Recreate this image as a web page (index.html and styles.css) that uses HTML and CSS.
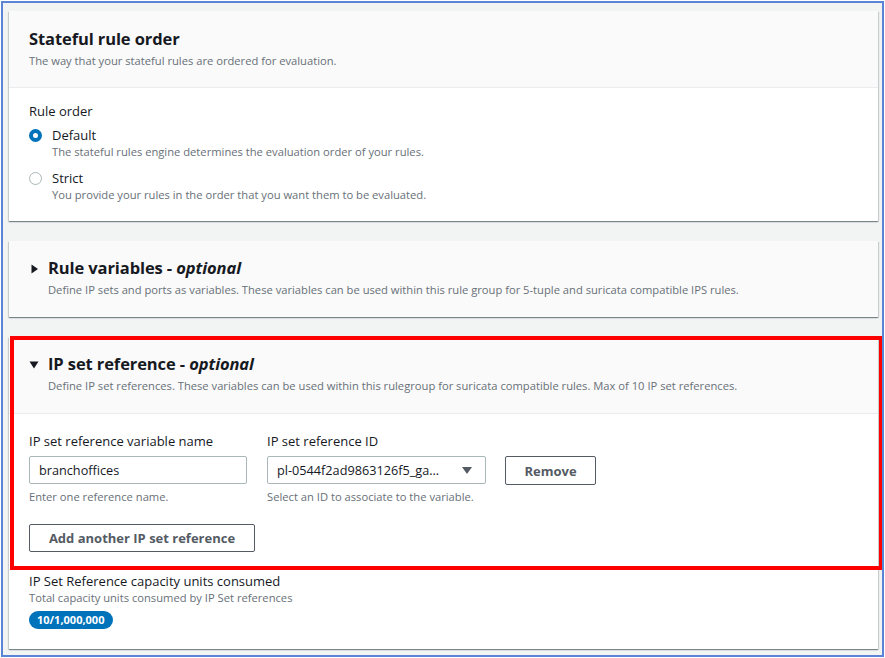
FILE: index.html
```html
<!DOCTYPE html>
<html lang="en">
<head>
    <meta charset="UTF-8">
    <meta name="viewport" content="width=device-width, initial-scale=1.0">
    <title>Stateful rule group</title>
    <link rel="stylesheet" href="styles.css">
</head>
<body>
    <div class="marco">
        <div class="tarjeta">
            <div class="tarjeta-cabecera">
                <h2 class="titulo">Stateful rule order</h2>
                <p class="descripcion">The way that your stateful rules are ordered for evaluation.</p>
            </div>
            <div class="tarjeta-cuerpo orden">
                <div class="etiqueta">Rule order</div>
                <div class="opcion">
                    <span class="radio marcado"></span>
                    <div>
                        <div class="opcion-texto">Default</div>
                        <div class="ayuda">The stateful rules engine determines the evaluation order of your rules.</div>
                    </div>
                </div>
                <div class="opcion">
                    <span class="radio"></span>
                    <div>
                        <div class="opcion-texto">Strict</div>
                        <div class="ayuda">You provide your rules in the order that you want them to be evaluated.</div>
                    </div>
                </div>
            </div>
        </div>

        <div class="tarjeta">
            <div class="tarjeta-cabecera plegable sin-borde">
                <h2 class="titulo">
                    <svg class="flecha" width="19" height="10" viewBox="0 0 19 10"><polygon points="2.5,0.5 9,5 2.5,9.5" fill="#16191f"/></svg>Rule variables - <i>optional</i>
                </h2>
                <p class="descripcion">Define IP sets and ports as variables. These variables can be used within this rule group for 5-tuple and suricata compatible IPS rules.</p>
            </div>
        </div>

        <div class="tarjeta ultima">
            <div class="resaltado"></div>
            <div class="tarjeta-cabecera plegable">
                <h2 class="titulo">
                    <svg class="flecha" width="19" height="10" viewBox="0 0 19 10"><polygon points="0.5,1.5 9.5,1.5 5,8.5" fill="#16191f"/></svg>IP set reference - <i>optional</i>
                </h2>
                <p class="descripcion">Define IP set references. These variables can be used within this rulegroup for suricata compatible rules. Max of 10 IP set references.</p>
            </div>
            <div class="tarjeta-cuerpo">
                <div class="fila">
                    <div class="campo">
                        <label class="etiqueta">IP set reference variable name</label>
                        <div class="entrada">branchoffices</div>
                        <div class="ayuda">Enter one reference name.</div>
                    </div>
                    <div class="campo">
                        <label class="etiqueta">IP set reference ID</label>
                        <div class="entrada selector">
                            <span>pl-0544f2ad9863126f5_ga...</span>
                            <svg width="10" height="8" viewBox="0 0 10 8"><polygon points="0,1 10,1 5,8" fill="#545b64"/></svg>
                        </div>
                        <div class="ayuda">Select an ID to associate to the variable.</div>
                    </div>
                    <button class="boton quitar">Remove</button>
                </div>
                <button class="boton agregar">Add another IP set reference</button>

                <div class="capacidad">
                    <div class="etiqueta">IP Set Reference capacity units consumed</div>
                    <div class="ayuda">Total capacity units consumed by IP Set references</div>
                    <span class="insignia">10/1,000,000</span>
                </div>
            </div>
        </div>
    </div>
</body>
</html>
```

FILE: styles.css
```css
* {
    box-sizing: border-box;
}

body {
    margin: 0;
    font-family: 'Open Sans', 'Noto Sans', Arial, sans-serif;
    color: #16191f;
    background-color: #fff;
}

.marco {
    margin: 1px;
    height: 656px;
    border: 2px solid #5b84d6;
    background-color: #f2f3f3;
    padding: 8px 4px 0 6px;
    overflow: hidden;
}

.tarjeta {
    background-color: #fff;
    box-shadow: 0 1px 1px 0 rgba(0, 28, 36, 0.35), 1px 1px 1px 0 rgba(0, 28, 36, 0.12), -1px 1px 1px 0 rgba(0, 28, 36, 0.12);
    margin-bottom: 20px;
    position: relative;
}

.tarjeta-cabecera {
    background-color: #fafafa;
    padding: 17px 20px 18px;
    border-bottom: 1px solid #eaeded;
}

.tarjeta-cabecera.sin-borde {
    border-bottom: none;
    padding-top: 16px;
    padding-bottom: 19px;
}

.titulo {
    margin: 0;
    font-size: 16.5px;
    line-height: 22px;
    font-weight: 700;
    letter-spacing: -0.1px;
}

.titulo i {
    font-weight: 700;
}

.descripcion {
    margin: 3px 0 0;
    font-size: 11.2px;
    line-height: 16px;
    color: #687078;
}

.plegable .descripcion {
    padding-left: 19px;
}

.flecha {
    vertical-align: 0;
}

.tarjeta-cuerpo {
    padding: 18px 20px 20px;
}

.tarjeta-cuerpo.orden {
    padding-top: 14px;
    padding-bottom: 19px;
}

.etiqueta {
    display: block;
    font-size: 13px;
    line-height: 18px;
}

.opcion {
    display: flex;
    gap: 10px;
    margin-top: 6px;
}

.opcion + .opcion {
    margin-top: 10px;
}

.opcion-texto {
    font-size: 13px;
    line-height: 18px;
}

.radio {
    width: 13px;
    height: 13px;
    border-radius: 50%;
    border: 1px solid #aab7b8;
    margin-top: 3px;
    flex-shrink: 0;
    background: #fff;
}

.radio.marcado {
    border: 4.5px solid #0073bb;
}

.ayuda {
    font-size: 11.2px;
    line-height: 15px;
    color: #687078;
}

.ultima {
    margin-bottom: 0;
}

.ultima .tarjeta-cabecera {
    padding-top: 16px;
    padding-bottom: 19px;
}

.resaltado {
    position: absolute;
    left: 1px;
    top: -1px;
    width: 873px;
    height: 234px;
    border: 4px solid #ff0000;
    z-index: 2;
    pointer-events: none;
}

.fila {
    display: flex;
    align-items: flex-start;
    gap: 20px;
}

.campo {
    width: 218px;
}

.campo + .campo {
    width: 219px;
}

.entrada {
    margin-top: 6px;
    height: 28px;
    border: 1px solid #aab7b8;
    border-radius: 2px;
    padding: 0 9px;
    font-size: 12.7px;
    line-height: 26px;
    margin-bottom: 5px;
}

.selector {
    display: flex;
    justify-content: space-between;
    align-items: center;
    padding-right: 13px;
}

.boton {
    font-family: inherit;
    background: #fff;
    border: 1px solid #545b64;
    border-radius: 2px;
    color: #545b64;
    font-weight: 700;
    font-size: 13px;
    height: 29px;
    cursor: pointer;
}

.quitar {
    margin-top: 24px;
    width: 91px;
    margin-left: -1px;
}

.agregar {
    margin-top: 20px;
    width: 226px;
    height: 28px;
    display: block;
}

.capacidad {
    margin-top: 20px;
}

.capacidad .etiqueta {
    font-size: 13px;
}

.insignia {
    display: inline-block;
    margin-top: 6px;
    background-color: #0073bb;
    color: #fff;
    font-size: 11px;
    font-weight: 700;
    line-height: 18px;
    padding: 0 9px 0 8px;
    border-radius: 10px;
}
```
